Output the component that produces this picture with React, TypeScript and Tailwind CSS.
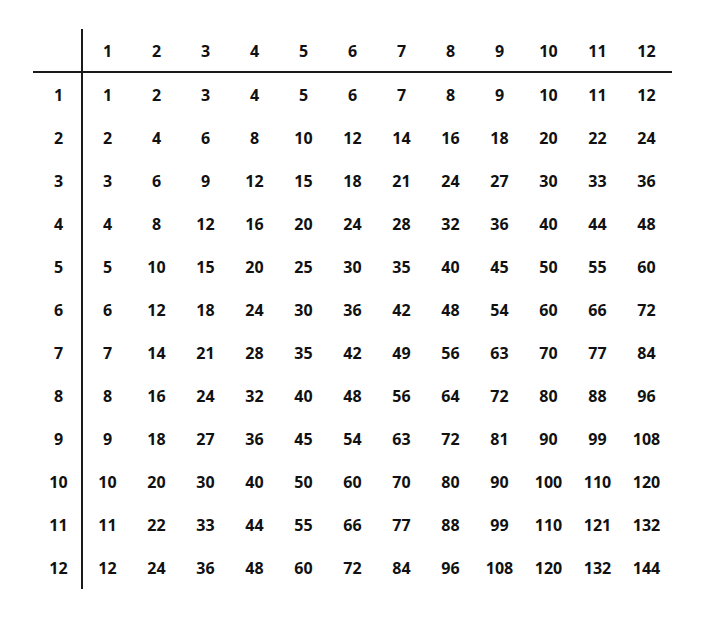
import * as React from "react"

const nums = Array.from({ length: 12 }, (_, i) => i + 1)

export default function App() {
  return (
    <div className="min-h-[620px] w-[706px] bg-white pt-[29px] pl-[33px] text-[16px] font-bold text-[#111] [font-family:'Open_Sans',sans-serif]">
      {/* header row */}
      <div className="flex w-[639px] border-b-2 border-[#1a1a1a]">
        <div className="h-[42px] w-[48px]" />
        <div className="flex h-[42px] items-center border-l-2 border-[#1a1a1a] pt-[2px]">
          {nums.map((n) => (
            <div key={n} className="w-[49px] text-center">
              {n}
            </div>
          ))}
        </div>
      </div>

      {/* body rows */}
      {nums.map((r) => (
        <div key={r} className="flex">
          <div className="flex h-[43px] w-[48px] items-center justify-center pl-[3px]">{r}</div>
          <div className="flex h-[43px] items-center border-l-2 border-[#1a1a1a]">
            {nums.map((c) => (
              <div key={c} className="w-[49px] text-center">
                {r * c}
              </div>
            ))}
          </div>
        </div>
      ))}
    </div>
  )
}
